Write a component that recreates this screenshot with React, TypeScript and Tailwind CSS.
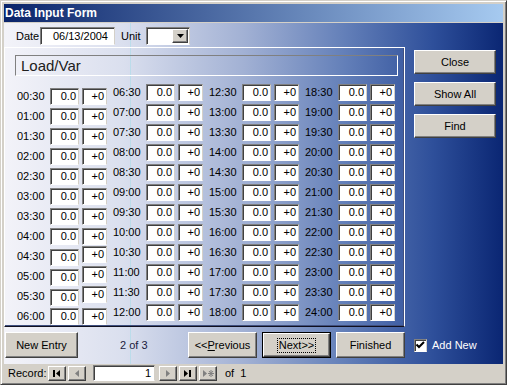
import React from 'react';

const times = Array.from({ length: 48 }, (_, i) => {
    const m = (i + 1) * 30;
    const h = Math.floor(m / 60);
    return `${String(h).padStart(2, '0')}:${m % 60 === 0 ? '00' : '30'}`;
});

// Win classic edge styles
const sunken =
    'bg-white border border-t-[#808080] border-l-[#808080] border-b-white border-r-[#d4d0c8] shadow-[inset_1px_1px_0_#404040]';
const raised =
    'bg-[#d4d0c8] border border-t-white border-l-white border-b-[#404040] border-r-[#404040] shadow-[inset_-1px_-1px_0_#808080]';

// rows in column 1 where the +0 box sits a bit higher
const shifted = ['04:30', '05:00', '05:30'];

const Row: React.FC<{ label: string }> = ({ label }) => {
    const shift = shifted.includes(label);
    return (
        <div className="flex h-[20px] items-center">
            <span className="w-[33px] text-[11px] leading-none text-black">{label}</span>
            <div
                className={`${sunken} flex h-[17px] w-[29px] items-center justify-end pr-[2px] text-[11px] leading-none ${shift ? 'self-end' : ''}`}
            >
                0.0
            </div>
            <div
                className={`${sunken} ml-[3px] flex h-[17px] w-[25px] items-center justify-end pr-[2px] text-[11px] leading-none ${shift ? 'self-start' : ''}`}
            >
                +0
            </div>
        </div>
    );
};

const NavButton: React.FC<{ children: React.ReactNode }> = ({ children }) => (
    <div className={`${raised} flex h-[15px] w-[18px] items-center justify-center`}>{children}</div>
);

const App: React.FC = () => {
    const columns = [0, 1, 2, 3].map(c => times.slice(c * 12, c * 12 + 12));

    return (
        <div className="h-[385px] w-[507px] overflow-hidden border border-t-[#d4d0c8] border-l-[#d4d0c8] border-b-[#404040] border-r-[#404040] bg-[#d4d0c8] p-[3px] font-['Liberation_Sans',Arial,sans-serif] shadow-[inset_1px_1px_0_#ffffff,inset_-1px_-1px_0_#808080]">
            {/* Title bar */}
            <div className="flex h-[18px] items-center bg-[linear-gradient(to_right,#0a246a,#a6caf0)] pl-[1px]">
                <span className="text-[12px] font-bold leading-none text-white">Data Input Form</span>
            </div>

            {/* Form body */}
            <div className="relative mt-[1px] flex h-[341px] flex-col bg-[linear-gradient(to_right,#f3f3f9_0%,#dadfee_24%,#a2b1d4_48%,#6480b9_68%,#2e4f9a_86%,#0a2673_100%)] pt-[4px]">
                <div className="pointer-events-none absolute left-[126px] top-0 h-full w-px bg-[#b4dcea]/80" />

                {/* Date / Unit */}
                <div className="relative flex h-[18px] items-center text-[11px] leading-none">
                    <span className="ml-[12px] w-[24px]">Date</span>
                    <div className={`${sunken} flex h-[18px] w-[75px] items-center justify-end pr-[6px]`}>06/13/2004</div>
                    <span className="ml-[6px] w-[25px]">Unit</span>
                    <div className={`${sunken} flex h-[18px] w-[44px] items-center justify-end pr-[1px]`}>
                        <div className={`${raised} flex h-[14px] w-[16px] items-center justify-center`}>
                            <svg width="7" height="4" viewBox="0 0 7 4">
                                <path d="M0 0h7L3.5 4z" fill="#000" />
                            </svg>
                        </div>
                    </div>
                </div>

                {/* Main area */}
                <div className="relative mt-[2px] flex">
                    <div className="h-[280px] w-[401px] border border-t-white border-l-white border-r-white border-b-[#101020] pl-[10px] pr-[6px] pt-[7px] shadow-[inset_-1px_-1px_0_#405080]">
                        <div className="flex h-[21px] w-[383px] items-center border border-t-[#808080] border-l-[#808080] border-b-white border-r-white pl-[5px] text-[15px] leading-none text-[#202020]">
                            Load/Var
                        </div>
                        <div className="ml-[2px] mt-[6px] flex gap-[6px]">
                            {columns.map((col, ci) => (
                                <div key={ci} className={`flex flex-col ${ci === 0 ? 'mt-[4px]' : ''}`}>
                                    {col.map(t => (
                                        <Row key={t} label={t} />
                                    ))}
                                </div>
                            ))}
                        </div>
                    </div>

                    {/* Right buttons */}
                    <div className="ml-[9px] mt-[3px] flex w-[82px] flex-col gap-[8px] text-[11px] leading-none">
                        <div className={`${raised} flex h-[24px] items-center justify-center`}>Close</div>
                        <div className={`${raised} flex h-[24px] items-center justify-center`}>Show All</div>
                        <div className={`${raised} flex h-[24px] items-center justify-center`}>Find</div>
                    </div>
                </div>

                {/* Bottom buttons */}
                <div className="relative mt-[5px] flex h-[26px] items-center text-[11px] leading-none">
                    <div className={`${raised} ml-[1px] flex h-[26px] w-[73px] items-center justify-center`}>New Entry</div>
                    <span className="ml-[42px] w-[68px] text-[#202040]">2 of 3</span>
                    <div className={`${raised} flex h-[26px] w-[69px] items-center justify-center`}>
                        &lt;&lt;<span className="underline">P</span>revious
                    </div>
                    <div className="ml-[5px] flex h-[26px] w-[69px] border border-black">
                        <div className={`${raised} flex flex-1 items-center justify-center`}>
                            <span className="border border-dotted border-black px-[1px] py-[1px]">Next&gt;&gt;</span>
                        </div>
                    </div>
                    <div className={`${raised} ml-[5px] flex h-[26px] w-[69px] items-center justify-center`}>Finished</div>
                    <div className={`${sunken} ml-[9px] flex h-[13px] w-[13px] items-center justify-center`}>
                        <svg width="9" height="8" viewBox="0 0 9 8">
                            <path d="M0.5 3.5l2.5 2.5 5-5" stroke="#000" strokeWidth="2" fill="none" />
                        </svg>
                    </div>
                    <span className="ml-[5px] text-white">Add New</span>
                </div>
            </div>

            {/* Record navigation */}
            <div className="flex h-[18px] items-center text-[11px] leading-none">
                <span className="ml-[4px] w-[40px]">Record:</span>
                <div className="flex gap-[2px]">
                    <NavButton>
                        <svg width="8" height="7" viewBox="0 0 8 7">
                            <rect x="0" y="0" width="2" height="7" fill="#000" />
                            <path d="M7 0v7L3 3.5z" fill="#000" />
                        </svg>
                    </NavButton>
                    <NavButton>
                        <svg width="5" height="7" viewBox="0 0 5 7">
                            <path d="M4 0v7L0 3.5z" fill="#808080" />
                        </svg>
                    </NavButton>
                </div>
                <div className={`${sunken} ml-[7px] flex h-[16px] w-[62px] items-center justify-end pr-[3px]`}>1</div>
                <div className="ml-[4px] flex gap-[2px]">
                    <NavButton>
                        <svg width="5" height="7" viewBox="0 0 5 7">
                            <path d="M0 0v7L4 3.5z" fill="#808080" />
                        </svg>
                    </NavButton>
                    <NavButton>
                        <svg width="8" height="7" viewBox="0 0 8 7">
                            <path d="M0 0v7L4 3.5z" fill="#000" />
                            <rect x="5" y="0" width="2" height="7" fill="#000" />
                        </svg>
                    </NavButton>
                    <NavButton>
                        <svg width="11" height="7" viewBox="0 0 11 7">
                            <path d="M0 0v7L4 3.5z" fill="#808080" />
                            <path d="M8 0v7M5 3.5h6M6 1l4 5M10 1l-4 5" stroke="#808080" strokeWidth="1" />
                        </svg>
                    </NavButton>
                </div>
                <span className="ml-[8px]">of&nbsp;&nbsp;1</span>
            </div>
        </div>
    );
};

export default App;
